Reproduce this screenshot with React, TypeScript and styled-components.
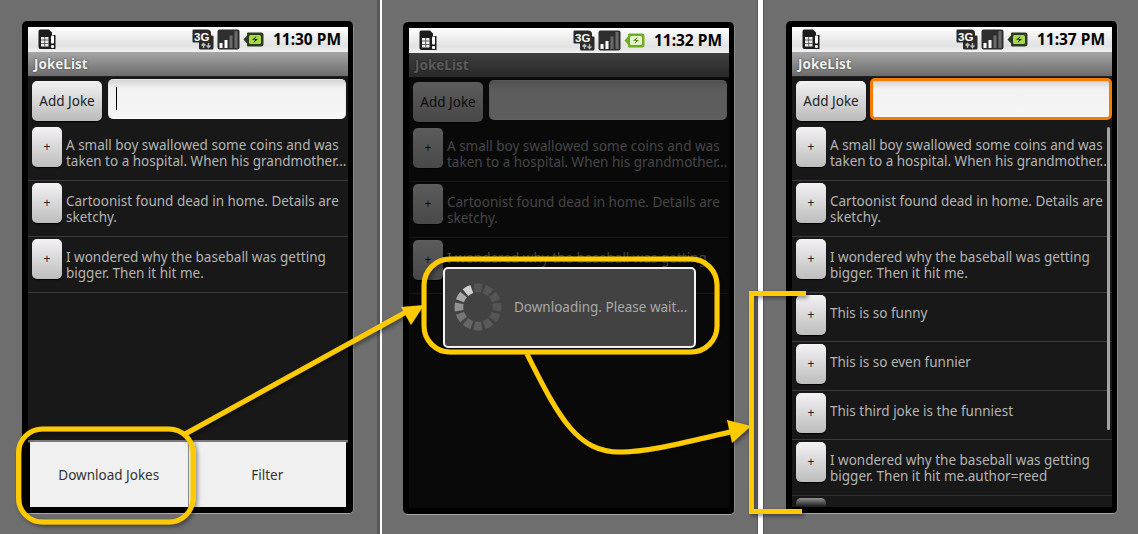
import React from 'react';
import styled, { createGlobalStyle } from 'styled-components';

const GlobalStyle = createGlobalStyle`
    html, body {
        margin: 0;
        height: 100%;
        overflow: hidden;
        background: #6e6e6e;
        font-family: "Noto Sans", "Open Sans", sans-serif;
    }
`;

const Page = styled.div`
    position: relative;
    display: flex;
    width: 1138px;
    height: 534px;
    overflow: hidden;
    background: #6e6e6e;
`;

const Panel = styled.div<{ $width: number; $left: number; $top: number }>`
    flex: none;
    box-sizing: border-box;
    width: ${p => p.$width}px;
    height: 534px;
    padding: ${p => p.$top}px 0 0 ${p => p.$left}px;
`;

const Divider = styled.div<{ $kind: 'first' | 'second' }>`
    flex: none;
    box-sizing: border-box;
    height: 534px;
    background: #fff;
    ${p =>
        p.$kind === 'first'
            ? 'width: 5px; border-left: 3px solid #585858;'
            : 'width: 7px; border-left: 1px solid #585858; border-right: 1px solid #2a5bc4;'}
`;

const Phone = styled.div`
    box-sizing: border-box;
    width: 332px;
    height: 493px;
    padding: 6px;
    background: #000;
    border-radius: 5px;
    border-bottom: 1px solid #a8a8a8;
    border-right: 1px solid #8a8a8a;
`;

const Screen = styled.div`
    display: flex;
    flex-direction: column;
    width: 320px;
    height: 480px;
    overflow: hidden;
`;

const StatusBar = styled.div`
    flex: none;
    display: flex;
    align-items: center;
    height: 25px;
    padding: 0 7px 0 10px;
    box-sizing: border-box;
    background: linear-gradient(#fff 0%, #f2f2f2 30%, #e2e2e2 75%, #f2f2f2 100%);
`;

const StatusIcons = styled.div`
    display: flex;
    align-items: center;
    gap: 3px;
    margin-left: auto;
`;

const Clock = styled.span`
    margin-left: 6px;
    font-size: 15.5px;
    font-weight: 700;
    line-height: 25px;
    color: #000;
    white-space: nowrap;
`;

const Content = styled.div`
    position: relative;
    flex: 1;
    display: flex;
    flex-direction: column;
    min-height: 0;
    background: #181818;
`;

const TitleBar = styled.div`
    flex: none;
    height: 25px;
    padding-left: 6px;
    box-sizing: border-box;
    background: linear-gradient(#a6a6a6, #6c6c6c);
    border-bottom: 1px solid #222;
    font-size: 13.5px;
    font-weight: 700;
    line-height: 24px;
    color: #eee;
    text-shadow: 0 0 2px #333;
`;

const AddRow = styled.div`
    flex: none;
    display: flex;
    height: 48px;
    padding-left: 4px;
    box-sizing: border-box;
`;

const AddButton = styled.div`
    width: 70px;
    height: 40px;
    margin-top: 4px;
    border-radius: 5px;
    background: linear-gradient(#f2f2f2, #bbb);
    box-shadow: 0 1px 1px #000;
    font-size: 13.5px;
    line-height: 40px;
    text-align: center;
    color: #222;
`;

const Input = styled.div<{ $focused?: boolean }>`
    position: relative;
    box-sizing: border-box;
    margin: ${p => (p.$focused ? '1px 0 0 4px' : '2px 0 0 6px')};
    width: ${p => (p.$focused ? '242px' : '238px')};
    height: ${p => (p.$focused ? '42px' : '40px')};
    border-radius: 5px;
    background: linear-gradient(#d4d4d4 0, #f2f2f2 22%, #f6f6f6 100%);
    border: ${p => (p.$focused ? '3px solid #f57c00' : '1px solid #e8e8e8')};
    border-bottom-color: ${p => (p.$focused ? '#f57c00' : '#fff')};
`;

const Cursor = styled.div`
    position: absolute;
    left: 7px;
    top: 7px;
    width: 1px;
    height: 23px;
    background: #000;
`;

const List = styled.div`
    position: relative;
    flex: 1;
    min-height: 0;
    overflow: hidden;
`;

const Item = styled.div`
    display: flex;
    align-items: flex-start;
    padding-left: 4px;
    border-bottom: 1px solid #3c3c3c;
`;

const PlusButton = styled.div`
    flex: none;
    width: 30px;
    height: 40px;
    margin: 2px 4px 6px 0;
    border-radius: 5px;
    background: linear-gradient(#f4f2f4, #bdbdbd);
    box-shadow: 0 1px 1px #000;
    font-size: 12px;
    line-height: 39px;
    text-align: center;
    color: #222;
`;

const ItemText = styled.div`
    padding: 12px 0 11px;
    min-width: 0;
    flex: 1;
    font-size: 13.5px;
    line-height: 16px;
    color: #b4b4b4;
`;

const Line = styled.div`
    white-space: nowrap;
`;

const ScrollThumb = styled.div`
    position: absolute;
    top: 2px;
    right: 2px;
    width: 3px;
    height: 303px;
    border-radius: 2px;
    background: #a4a4a4;
`;

const BottomFade = styled.div`
    position: absolute;
    left: 0;
    right: 0;
    bottom: 0;
    height: 16px;
    background: linear-gradient(transparent, #181818);
`;

const Menu = styled.div`
    flex: none;
    display: flex;
    height: 67px;
    box-sizing: border-box;
    padding: 2px 2px 0;
    background: linear-gradient(#7a7a7a 0, #7a7a7a 2px, #000 3px);
`;

const MenuCell = styled.div<{ $first?: boolean }>`
    flex: 1;
    display: flex;
    align-items: center;
    justify-content: center;
    background: #f0f0f0;
    font-size: 13.5px;
    color: #333;
    border-right: ${p => (p.$first ? '1px solid #8f8f8f' : 'none')};
`;

const Dim = styled.div`
    position: absolute;
    inset: 0;
    background: rgba(0, 0, 0, 0.62);
`;

const Dialog = styled.div`
    position: absolute;
    left: 34px;
    top: 214px;
    box-sizing: border-box;
    width: 253px;
    height: 81px;
    display: flex;
    align-items: center;
    padding: 0 0 2px 8px;
    background: #424242;
    border: 2px solid #f4f4f4;
    border-radius: 5px;
`;

const DialogText = styled.span`
    margin-left: 11px;
    font-size: 13.5px;
    color: #a8a8a8;
    white-space: nowrap;
`;

const Annotations = styled.svg`
    position: absolute;
    left: 0;
    top: 0;
    pointer-events: none;
`;

const SimIcon = () => (
    <svg width="18" height="21" viewBox="0 0 18 21">
        <path d="M0.5 2.5 Q0.5 0.5 2.5 0.5 H11 L14 3.5 V6 H17.5 V20 H2.5 Q0.5 20 0.5 18 Z" fill="#1c1c1c" />
        <path d="M3 8 H10.5 V17.5 H3 Z" fill="#ececec" />
        <path d="M3 11 H10.5 M3 14.5 H10.5 M6.7 8 V17.5" stroke="#555" strokeWidth="0.9" />
        <rect x="13" y="6.5" width="3" height="8" rx="1" fill="#fff" />
        <rect x="13" y="16" width="3" height="3" rx="1" fill="#fff" />
    </svg>
);

const NetworkIcon = () => (
    <svg width="22" height="21" viewBox="0 0 22 21">
        <path d="M0.5 1.5 Q0.5 0.5 1.5 0.5 H15 Q19 0.5 19 4 V6.5 H20.5 Q21.5 6.5 21.5 7.5 V19 Q21.5 20.5 20 20.5 H8.5 Q7 20.5 7 19 V13.5 H1.5 Q0.5 13.5 0.5 12.5 Z" fill="#2a2a2a" />
        <text x="2" y="11.5" fontFamily="'Liberation Sans', sans-serif" fontSize="11.5" fontWeight="700" fill="#fff">3G</text>
        <path d="M11.5 19 V15 M9.5 16.5 L11.5 14.5 L13.5 16.5" stroke="#bbb" strokeWidth="1.4" fill="none" />
        <path d="M16.5 14 V18.5 M14.5 16.5 L16.5 18.5 L18.5 16.5" stroke="#bbb" strokeWidth="1.4" fill="none" />
    </svg>
);

const SignalIcon = () => (
    <svg width="23" height="21" viewBox="0 0 23 21">
        <rect x="0.5" y="0.5" width="22" height="20" rx="2" fill="#2e2e2e" />
        <rect x="2.5" y="14" width="3" height="5" fill="#fff" />
        <rect x="7.5" y="11" width="3" height="8" fill="#fff" />
        <rect x="12.5" y="6.5" width="3" height="12.5" fill="#6a6a6a" />
        <rect x="17.5" y="2" width="3" height="17" fill="#6a6a6a" />
    </svg>
);

const BatteryIcon = ({ live }: { live?: boolean }) => (
    <svg width="21" height="15" viewBox="0 0 21 15">
        <path d="M0.5 7.5 L4 3.5 V1.5 Q4 0.5 5 0.5 H18 Q20.5 0.5 20.5 3 V12 Q20.5 14.5 18 14.5 H5 Q4 14.5 4 13.5 V11.5 Z" fill={live ? '#6fae1e' : '#2c3a22'} />
        <rect x="6" y="3" width="12" height="9" rx="1.5" fill={live ? '#e8f5d0' : '#a8d848'} />
        <path d="M13.5 4 L9 7.8 H12 L10.5 11 L15 7 H12 Z" fill={live ? '#4c8a10' : '#1c2a14'} />
    </svg>
);

const segmentShades = ['#555', '#555', '#555', '#555', '#555', '#595959', '#5e5e5e', '#666', '#757575', '#929292', '#a8a8a8', '#d0d0d0'];

const Spinner = () => (
    <svg width="50" height="50" viewBox="-25 -25 50 50">
        {segmentShades.map((shade, index) => (
            <path
                key={index}
                d="M-4.4 -23 Q0 -24 4.4 -23 L2.9 -14.5 Q0 -15 -2.9 -14.5 Z"
                fill={shade}
                transform={`rotate(${index * 30})`}
            />
        ))}
    </svg>
);

const baseJokes = [
    ['A small boy swallowed some coins and was', 'taken to a hospital. When his grandmother...'],
    ['Cartoonist found dead in home. Details are', 'sketchy.'],
    ['I wondered why the baseball was getting', 'bigger. Then it hit me.'],
];

const moreJokes = [
    ['This is so funny'],
    ['This is so even funnier'],
    ['This third joke is the funniest'],
    ['I wondered why the baseball was getting', 'bigger. Then it hit me.author=reed'],
    [],
];

const JokeItems = ({ jokes }: { jokes: string[][] }) => (
    <>
        {jokes.map((lines, index) => (
            <Item key={index}>
                <PlusButton>{lines.length > 0 && '+'}</PlusButton>
                <ItemText>
                    {lines.map(line => (
                        <Line key={line}>{line}</Line>
                    ))}
                </ItemText>
            </Item>
        ))}
    </>
);

const Status = ({ time, live }: { time: string; live?: boolean }) => (
    <StatusBar>
        <SimIcon />
        <StatusIcons>
            <NetworkIcon />
            <SignalIcon />
            <BatteryIcon live={live} />
            <Clock>{time}</Clock>
        </StatusIcons>
    </StatusBar>
);

const yellow = '#ffcb00';

const App = () => (
    <Page>
        <GlobalStyle />
        <Panel $width={377} $left={22} $top={21}>
            <Phone>
                <Screen>
                    <Status time="11:30 PM" />
                    <Content>
                        <TitleBar>JokeList</TitleBar>
                        <AddRow>
                            <AddButton>Add Joke</AddButton>
                            <Input>
                                <Cursor />
                            </Input>
                        </AddRow>
                        <List>
                            <JokeItems jokes={baseJokes} />
                        </List>
                        <Menu>
                            <MenuCell $first>Download Jokes</MenuCell>
                            <MenuCell>Filter</MenuCell>
                        </Menu>
                    </Content>
                </Screen>
            </Phone>
        </Panel>
        <Divider $kind="first" />
        <Panel $width={375} $left={21} $top={22}>
            <Phone>
                <Screen>
                    <Status time="11:32 PM" live />
                    <Content>
                        <TitleBar>JokeList</TitleBar>
                        <AddRow>
                            <AddButton>Add Joke</AddButton>
                            <Input />
                        </AddRow>
                        <List>
                            <JokeItems jokes={baseJokes} />
                        </List>
                        <Dim />
                        <Dialog>
                            <Spinner />
                            <DialogText>Downloading. Please wait...</DialogText>
                        </Dialog>
                    </Content>
                </Screen>
            </Phone>
        </Panel>
        <Divider $kind="second" />
        <Panel $width={374} $left={22} $top={21}>
            <Phone>
                <Screen>
                    <Status time="11:37 PM" />
                    <Content>
                        <TitleBar>JokeList</TitleBar>
                        <AddRow>
                            <AddButton>Add Joke</AddButton>
                            <Input $focused />
                        </AddRow>
                        <List>
                            <JokeItems jokes={[...baseJokes, ...moreJokes]} />
                            <ScrollThumb />
                            <BottomFade />
                        </List>
                    </Content>
                </Screen>
            </Phone>
        </Panel>
        <Annotations width="1138" height="534" viewBox="0 0 1138 534">
            <defs>
                <filter id="soft" x="-10%" y="-10%" width="120%" height="120%">
                    <feDropShadow dx="2" dy="2" stdDeviation="2" floodColor="#000" floodOpacity="0.45" />
                </filter>
            </defs>
            <g filter="url(#soft)" fill="none" stroke={yellow} strokeWidth="5">
                <rect x="18.5" y="429" width="174.5" height="93" rx="24" />
                <path d="M185 434 L408 311" />
                <path d="M424 305 L401 307 L411 325 Z" fill={yellow} stroke="none" />
                <rect x="424" y="259" width="293" height="93" rx="26" />
                <path d="M527 354 C560 420 578 452 620 452 C650 452 690 441 735 431" />
                <path d="M751 426 L727 420 L732 443 Z" fill={yellow} stroke="none" />
                <path d="M806 293.5 H751.5 V511.5 H802" />
            </g>
        </Annotations>
    </Page>
);

export default App;
